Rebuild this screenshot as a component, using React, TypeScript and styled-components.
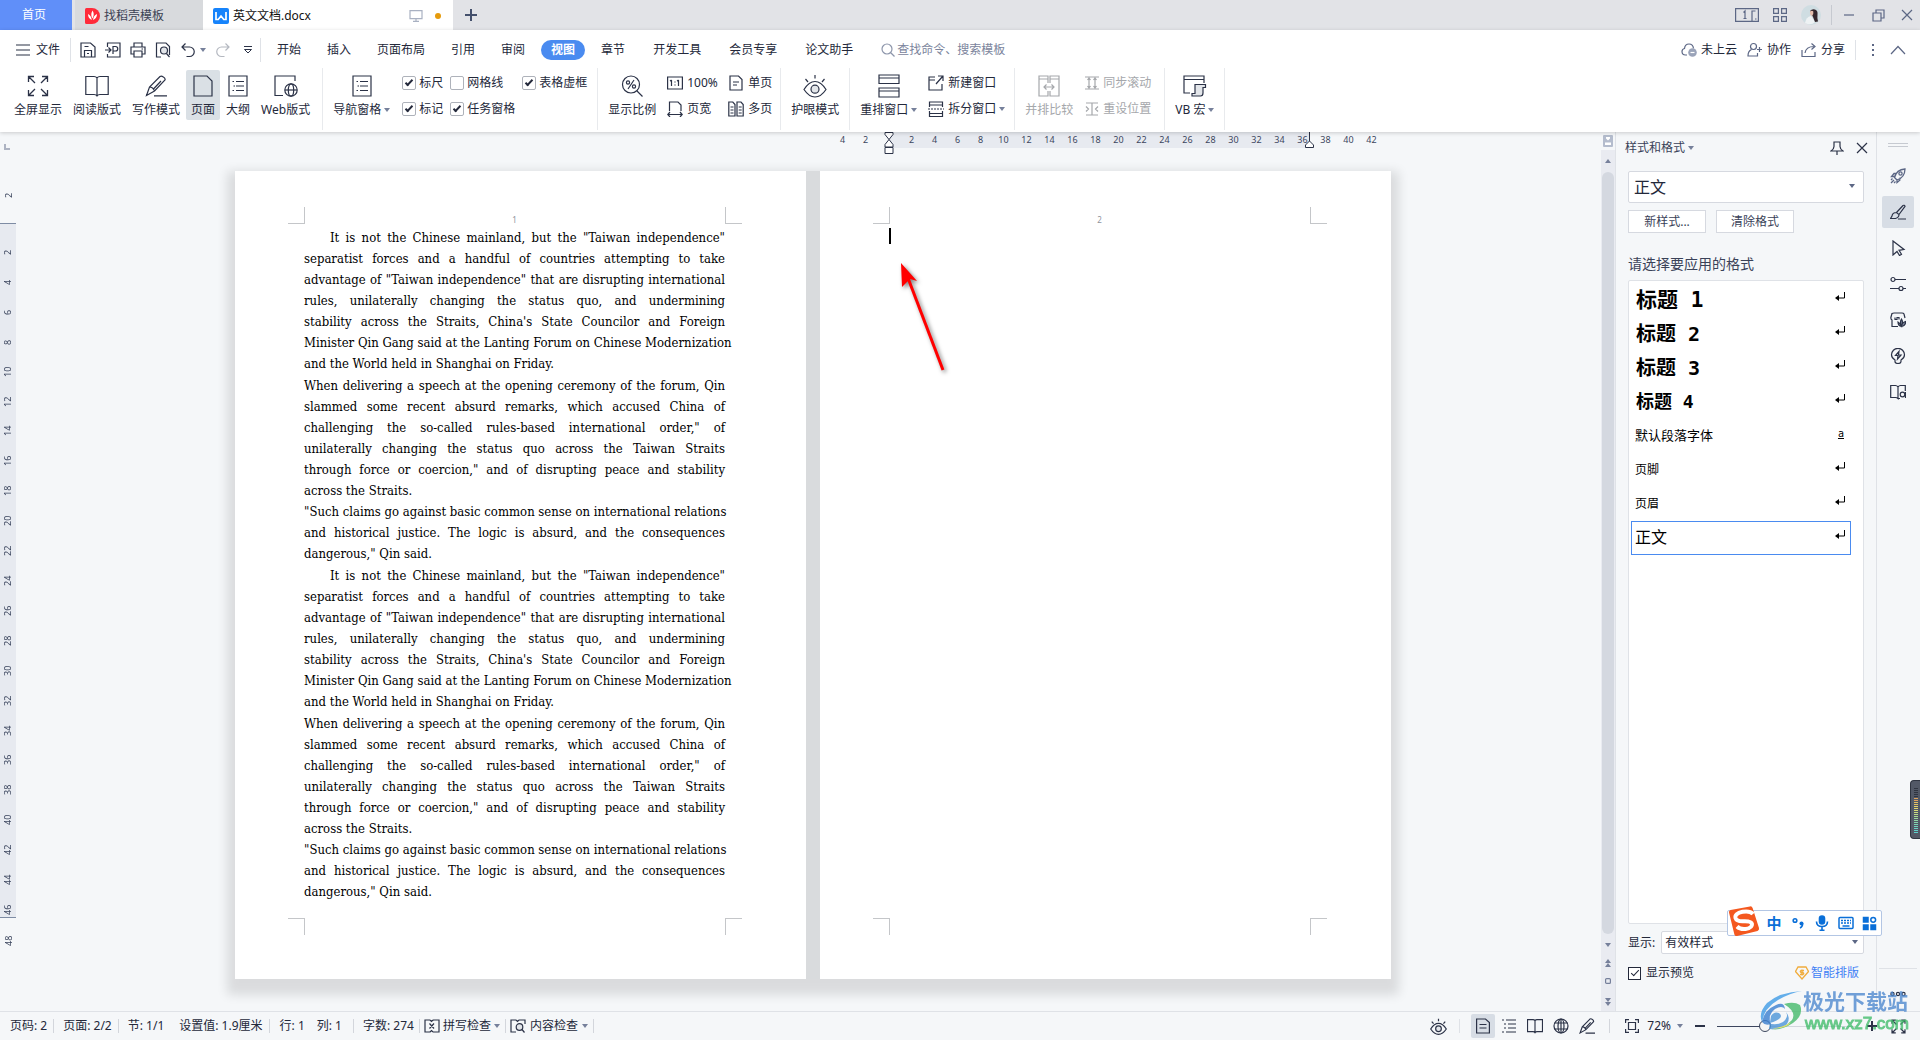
import React from "react";
import styled, { createGlobalStyle, css } from "styled-components";

const ink = "#2b3247";
const soft = "#5c6785";
const line = "#dfe2e7";
const canvasBg = "#f5f7f9";
const uiFont = `"Noto Sans", "Noto Sans CJK SC", sans-serif`;

const GlobalStyle = createGlobalStyle`
  *, *::before, *::after { box-sizing: border-box; }
  body { margin: 0; background: ${canvasBg}; font-family: ${uiFont}; font-size: 12px; line-height: 16px; color: #23283a; }
  button, input, select { font: inherit; color: inherit; margin: 0; }
  button { border: 0; background: none; padding: 0; cursor: pointer; white-space: nowrap; }
  ul, p { margin: 0; padding: 0; list-style: none; }
  svg { display: block; flex: none; }
`;

/* ---------- icons ---------- */

interface IconProps {
  w?: number;
  h?: number;
  color?: string;
  sw?: number;
  children?: React.ReactNode;
}

const Icon = ({ w = 16, h = w, color = ink, sw = 1.2, children }: IconProps) => (
  <svg width={w} height={h} viewBox={`0 0 ${w} ${h}`} fill="none" stroke={color} strokeWidth={sw} aria-hidden="true">
    {children}
  </svg>
);

const Caret = ({ color = "#76809b" }: { color?: string }) => (
  <svg width="6" height="4" viewBox="0 0 6 4" fill={color} aria-hidden="true"><path d="M0 0h6L3 4z" /></svg>
);

const DocerLogo = () => (
  <svg width="15" height="16" viewBox="0 0 15 16" aria-hidden="true">
    <path d="M0 1.500Q0 0 1.500 0H7a8 8 0 0 1 0 16H1.500Q0 16 0 14.500z" fill="#ff2b3a" />
    <path d="M7.600 2.500q2.200 4-.2 8-2.200-4 .2-8zM3 6q3.200 1.500 3.800 6Q3 10.500 3 6zM12 6q0 4.500-4 6 .4-4.500 4-6z" fill="#fff" />
  </svg>
);

const WriterLogo = () => (
  <svg width="16" height="16" viewBox="0 0 16 16" aria-hidden="true">
    <rect width="16" height="16" rx="2" fill="#1683fb" />
    <path d="M3 4v7.500h2.200L8 8l2.800 3.500H13V4" fill="none" stroke="#fff" strokeWidth="1.700" />
  </svg>
);

const SaveIcon = () => (
  <Icon><path d="M1 1h9.500L15 5v10H1zM4.500 15V8.500h7V15M4.500 4.500h4M7 11.500h2" /></Icon>
);
const ExportIcon = () => (
  <Icon><path d="M2.500 5V1h12.500v14H2.500v-3M0 8h6M3.500 5.500L6 8l-2.500 2.500M8 12V4.500h2.500a2.200 2.200 0 0 1 0 4.500H8" /></Icon>
);
const PrintIcon = () => (
  <Icon><path d="M4 5V1h8v4M4 12H1V5h14v7h-3M4 9h8v6H4zM11.500 7h1.500" /></Icon>
);
const PreviewIcon = () => (
  <Icon><path d="M6 15H1.500V1H11l3.500 3.500V13" /><circle cx="9" cy="8.500" r="3.500" fill="#e3e6ea" /><path d="M11.500 11.500l3 3.500" /></Icon>
);
const UndoIcon = ({ flip = false, color = ink }: { flip?: boolean; color?: string }) => (
  <Icon color={color}>
    <g transform={flip ? "translate(16 0) scale(-1 1)" : undefined}>
      <path d="M5.500 1.500L2 5l3.500 3.500M2 5h7.500a4.700 4.700 0 0 1 0 9.500H6.500" />
    </g>
  </Icon>
);

const FullIcon = ({ s = 22 }: { s?: number }) => (
  <svg width={s} height={s} viewBox="0 0 22 22" fill="none" stroke={ink} strokeWidth={s < 20 ? 1.800 : 1.300} aria-hidden="true">
    <path d="M1.500 7V1.500H7M1.500 1.500L8 8M15 1.500h5.500V7M20.500 1.500L14 8M1.500 15v5.500H7M1.500 20.500L8 14M15 20.500h5.500V15M20.500 20.500L14 14" />
  </svg>
);
const BookIcon = ({ s = 24 }: { s?: number }) => (
  <svg width={s} height={s} viewBox="0 0 24 24" fill="none" stroke={ink} strokeWidth={s < 20 ? 1.700 : 1.200} aria-hidden="true">
    <path d="M12 4Q11 2.500 9 2.500H.8V20.500H9q2 0 3 1.500 1-1.500 3-1.500h8.200V2.500H15q-2 0-3 1.500zM12 4v18" />
  </svg>
);
const PenIcon = ({ s = 22 }: { s?: number }) => (
  <svg width={s} height={s} viewBox="0 0 22 22" fill="none" stroke={ink} strokeWidth={s < 20 ? 1.600 : 1.200} aria-hidden="true">
    <path d="M1.500 20.500L4.500 12 15 1.500q1.500-1 3 .3 2.700 1.700 2 3.200L9.500 16zM4.500 12q3.500 0 5 4M16 6L8 14.500M9 20.800h13" />
  </svg>
);
const PageIcon = () => (
  <Icon w={20} h={22}><path d="M1 1h13l5 5v15H1z" /></Icon>
);
const OutlineIcon = () => (
  <Icon w={20} h={22}><path d="M1 1h18v20H1zM8 6.500h8M8 11h8M8 15.500h8M4.500 6.500h1.500M5.500 11H7M4.500 15.500h1.500" /></Icon>
);
const WebIcon = () => (
  <Icon w={24} h={22}>
    <path d="M9 20.500H1V1h20v5" /><circle cx="17" cy="15" r="6.200" /><ellipse cx="17" cy="15" rx="2.700" ry="6.200" /><path d="M11 15h12" />
  </Icon>
);
const ZoomPctIcon = () => (
  <Icon w={22} h={22}>
    <circle cx="10" cy="9.500" r="8.500" /><path d="M16 16l5.500 5.500M13 5l-6 9" /><circle cx="7" cy="7.500" r="1.600" /><circle cx="13" cy="11.500" r="1.600" />
  </Icon>
);
const OneToOneIcon = () => (
  <Icon h={14}><path d="M.6 1h14.800v12H.6zM4.500 4v6M3 5l1.500-1M11.500 4v6M10 5l1.500-1M8 5.500v1M8 8.500v1" /></Icon>
);
const PageWidthIcon = () => (
  <Icon><path d="M2.500 10V1H11l3 3v6M.8 13.500h14.400M3 11L.8 13.500 3 16M13 11l2.200 2.500L13 16" /></Icon>
);
const SinglePageIcon = () => (
  <Icon><path d="M2 1h8.500L14 4.500V15H2zM5 7h6M5 10h4" /></Icon>
);
const MultiPageIcon = () => (
  <Icon><path d="M.8 1h4L7 3.500V15H.8zM9 1h4l2.200 2.500V15H9zM2.500 6h3M2.500 9h3M2.500 12h3M10.700 6h3M10.700 9h3M10.700 12h3" /></Icon>
);
const EyeCareIcon = ({ s = 24 }: { s?: number }) => (
  <svg width={s} height={s} viewBox="0 0 24 24" fill="none" stroke={ink} strokeWidth={s < 20 ? 1.700 : 1.200} aria-hidden="true">
    <path d="M1 15.500Q6 7.500 12 7.500t11 8Q18 23 12 23T1 15.500z" /><circle cx="12" cy="15.200" r="4" fill="#e3e6ea" /><path d="M12 1v3.500M2.500 5l2.500 3M21.500 5L19 8" />
  </svg>
);
const ArrangeIcon = () => (
  <Icon w={22} h={24}><path d="M1 9.500V1h20v8.500zM1 4h20M1 14h20v9H1zM1 17h20" /></Icon>
);
const NewWindowIcon = () => (
  <Icon><path d="M7 2H1v13h13V9M1 5h6M8 9l6.500-7.500M10 1h5v5" /></Icon>
);
const SplitIcon = () => (
  <Icon><path d="M1.500 6V1h13v5M1.500 4h13M1.500 10v5.500h13V10M1.500 12.500h13" /><path d="M0 8h16" strokeDasharray="2 1" /></Icon>
);
const CompareIcon = () => (
  <Icon w={22} h={22} color="#a5a7ab"><path d="M10 8V1H1v20h9v-5M12 8V1h9v20h-9v-5M1 4h9M12 4h9M6 12h10M8.500 9.500L6 12l2.500 2.500M13.500 9.500L16 12l-2.500 2.500" /></Icon>
);
const SyncIcon = () => (
  <Icon w={14} h={14} color="#a5a7ab"><path d="M0 1h14M0 13h14M4 2v10M2.500 4L4 2l1.500 2M2.500 10L4 12l1.500-2M10 2v10M8.500 4L10 2l1.500 2M8.500 10l1.500 2 1.500-2" /></Icon>
);
const ResetIcon = () => (
  <Icon w={14} h={14} color="#a5a7ab"><path d="M1 1h12M1 13h12M7 1v12M1 4.500L3.500 7 1 9.500M13 4.500L10.500 7 13 9.500" /></Icon>
);
const MacroIcon = () => (
  <Icon w={24} h={22}><path d="M7 18H1V1h20v7M1 4.500h20" /><path d="M12 9.500h10.500v3H20V18q0 3-2.500 3H9v-2.500h3z" fill="#e3e6ea" /></Icon>
);

const RocketIcon = () => (
  <Icon color={soft} sw={1.300}><path d="M6 11L4.500 9.500Q6.500 1.500 15 1q-.2 8.500-8 11zM4.800 8.500H1.500L4 5.500h2.500M7 11.500v3l3-2.500V9.500M1 15l3-3M1 12l1.500-1.500M4 15l1.500-1.500" /><circle cx="10.500" cy="5.500" r="1.600" /></Icon>
);
const BrushIcon = () => (
  <Icon><path d="M6.500 8.500L13 1.500q1.500-.8 2 .8L9 10.500M6.500 8.500Q2.500 8.500 2 12l-1.500 2.500h5Q9 13.500 9 10.500zM8 15h8" /></Icon>
);
const CursorIcon = () => (
  <Icon><path d="M3 1l11 8.500-5 .8 2.500 4-2 1.200L7 11.500 3 15z" /></Icon>
);
const SlidersIcon = () => (
  <Icon><circle cx="3" cy="3.500" r="2" /><path d="M5 3.500h11M0 12.500h9M13 12.500h3" /><circle cx="11" cy="12.500" r="2" /></Icon>
);
const ShopIcon = () => (
  <Icon><path d="M8 14.500H2V8Q.5 7 1 5l1-3.500Q3 1 4 1h8q1.500 0 2 1l1 4M5 5.500v2h2v-2h2v2" /><path d="M11.500 7q2 3 0 7-2-4 0-7zM8 10q0 4 3.500 4.500Q10 11 8 10zM15.500 9.500q.5 4-4 5 .5-4 4-5z" fill="#8089a0" /></Icon>
);
const BulbIcon = () => (
  <Icon><path d="M5 13.500V12Q1.500 10 1.500 6.800a6.500 6.500 0 0 1 13 0Q14.500 10 11 12v1.500q0 2-3 2t-3-2z" /><path d="M9 3.500L5.500 7.500H8L7.500 11l3.500-4H8.500z" /></Icon>
);
const LookupIcon = () => (
  <Icon><path d="M8 3Q7 1.500 5.500 1.500H.7V13.500H5.500Q7 13.500 8 14.500V3q1-1.500 2.500-1.500h4.800V7M8 14.500h2" /><circle cx="12.500" cy="10.500" r="2.300" /><path d="M15.500 8v6" /></Icon>
);

/* ---------- title bar ---------- */

const Shell = styled.div`
  display: flex;
  flex-direction: column;
  height: 100vh;
  overflow: hidden;
`;

const TitleBar = styled.header`
  display: flex;
  height: 30px;
  background: #e2e3e7;
`;

const HomeTab = styled.button`
  width: 72px;
  margin-right: 3px;
  padding-right: 4px;
  background: #608ff9;
  color: #fff;
`;

const FileTab = styled.button<{ $active?: boolean }>`
  display: flex;
  align-items: center;
  gap: 4px;
  width: ${p => (p.$active ? 250 : 128)}px;
  padding: 1px 12px 0 10px;
  background: ${p => (p.$active ? "#fff" : "#d8dadd")};
  color: ${p => (p.$active ? "#111" : "#3c4254")};
`;

const TabTools = styled.span`
  display: flex;
  align-items: center;
  gap: 12px;
  margin-left: auto;
`;

const UnsavedDot = styled.span`
  width: 6px;
  height: 6px;
  border-radius: 50%;
  background: #e69b0c;
`;

const NewTab = styled.button`
  display: grid;
  place-items: center;
  width: 36px;
`;

const WindowTools = styled.div`
  display: flex;
  align-items: center;
  gap: 14px;
  margin-left: auto;
  padding-right: 7px;
`;

const WindowButtons = styled.div`
  display: flex;
  align-items: center;
  gap: 16px;
  height: 20px;
  padding-left: 12px;
  margin-left: -4px;
  border-left: 1px solid #c6c9d0;
`;

/* ---------- menu row ---------- */

const Header = styled.div`
  position: relative;
  z-index: 2;
  background: #fff;
  box-shadow: 0 1px 4px rgba(0, 0, 0, 0.18);
`;

const MenuRow = styled.nav`
  display: flex;
  align-items: center;
  height: 38px;
  padding: 2px 14px 0 16px;
`;

const FileButton = styled.button`
  display: flex;
  align-items: center;
  gap: 6px;
  padding-right: 10px;
`;

const QuickTools = styled.div`
  display: flex;
  align-items: center;
  gap: 9px;
  height: 24px;
  padding: 0 4px 0 9px;
  border: solid ${line};
  border-width: 0 1px;
`;

const UndoGroup = styled.span`
  display: flex;
  align-items: center;
  gap: 4px;
`;

const MenuTabs = styled.div<{ $gap: number }>`
  display: flex;
  gap: ${p => p.$gap}px;
  margin-left: ${p => p.$gap}px;
`;

const MenuTab = styled.button<{ $active?: boolean }>`
  height: 20px;
  padding: 0 10px;
  border-radius: 10px;
  ${p => p.$active && css`
    background: #4a8bf0;
    color: #fff;
    font-weight: 700;
  `}
`;

const Search = styled.label`
  display: flex;
  align-items: center;
  gap: 2px;
  margin-left: 18px;
`;

const SearchInput = styled.input`
  width: 140px;
  border: 0;
  padding: 0;
  background: none;
  outline: 0;
  &::placeholder { color: #7b849c; opacity: 1; }
`;

const MenuRight = styled.div`
  display: flex;
  align-items: center;
  gap: 10px;
  margin-left: auto;
`;

const IconText = styled.button<{ $gap?: number }>`
  display: flex;
  align-items: center;
  gap: ${p => p.$gap ?? 4}px;
  &:disabled { color: #a5a7ab; }
`;

const VRule = styled.span<{ $h: number }>`
  width: 1px;
  height: ${p => p.$h}px;
  background: ${line};
`;

/* ---------- ribbon ---------- */

const Ribbon = styled.div`
  display: flex;
  height: 64px;
  padding-left: 9px;
`;

const Group = styled.section<{ $gap?: number; $pad?: string }>`
  display: flex;
  gap: ${p => p.$gap ?? 0}px;
  height: 62px;
  padding: ${p => p.$pad ?? "0 5px"};
  border-right: 1px solid #e8eaed;
`;

const BigButton = styled.button<{ $active?: boolean }>`
  display: flex;
  flex-direction: column;
  align-items: center;
  gap: 4px;
  height: 50px;
  margin-top: 2px;
  padding: 4px 5px 0;
  border-radius: 2px;
  background: ${p => (p.$active ? "#dae0e5" : "none")};
  &:disabled { color: #a5a7ab; }
`;

const BigIcon = styled.span`
  display: grid;
  place-items: center;
  height: 24px;
`;

const Label = styled.span`
  display: flex;
  align-items: center;
  gap: 3px;
`;

const SmallGrid = styled.div<{ $cols: string; $gap?: number }>`
  display: grid;
  grid-template-columns: ${p => p.$cols};
  column-gap: ${p => p.$gap ?? 10}px;
  row-gap: 10px;
  align-content: start;
  align-items: center;
  padding-top: 7px;
  grid-auto-rows: 16px;
`;

const CheckLabel = styled.label<{ $gap?: number }>`
  display: flex;
  align-items: center;
  gap: ${p => p.$gap ?? 3}px;
  white-space: nowrap;
`;

const Check = styled.input.attrs({ type: "checkbox" })<{ $square?: boolean }>`
  appearance: none;
  display: grid;
  place-items: center;
  width: ${p => (p.$square ? 13 : 14)}px;
  height: ${p => (p.$square ? 13 : 14)}px;
  flex: none;
  border: 1px solid ${p => (p.$square ? "#23283a" : "#aeb2ba")};
  border-radius: ${p => (p.$square ? 0 : 2)}px;
  background: #fff;
  &:checked::after {
    content: "";
    width: 8px;
    height: 4px;
    margin-top: -2px;
    border: solid #23283a;
    border-width: 0 0 ${p => (p.$square ? 1 : 2)}px ${p => (p.$square ? 1 : 2)}px;
    transform: rotate(-47deg);
  }
`;

/* ---------- workspace ---------- */

const Workspace = styled.div`
  display: grid;
  grid-template-columns: 16px minmax(0, 1fr) 14px 261px 44px;
  flex: 1;
  min-height: 0;
`;

const VRuler = styled.div`
  display: flex;
  flex-direction: column;
  font-size: 9px;
  line-height: 10px;
  color: #3c465e;
`;

const VTop = styled.div`
  display: flex;
  flex-direction: column;
  justify-content: space-between;
  height: 91px;
  padding: 12px 0 13px 4px;
  flex: none;
`;

const TabStop = styled.span`
  width: 6px;
  height: 6px;
  border: solid #adb3c2;
  border-width: 0 0 2px 2px;
`;

const VBody = styled.div`
  flex: none;
  height: 695px;
  padding-top: 13px;
  background: #e7eaf0;
  border: solid #7e8ca4;
  border-width: 1px 0;
`;

const VCells = styled.div`
  display: flex;
  flex-direction: column;
  height: 688px;
`;

const VCell = styled.span<{ $fixed?: boolean }>`
  display: grid;
  place-items: center;
  width: ${p => (p.$fixed ? 8 : 16)}px;
  flex: ${p => (p.$fixed ? "0 0 30px" : "1")};
  writing-mode: vertical-rl;
  transform: rotate(180deg);
`;

const VTail = styled.div`
  padding: 8px 0 0 4px;
  display: flex;
  flex-direction: column;
`;

const Canvas = styled.main`
  display: flex;
  flex-direction: column;
  align-items: center;
  min-width: 0;
  padding-left: 9px;
  overflow: hidden;
`;

const HRuler = styled.div`
  display: flex;
  width: 1156px;
  height: 16px;
  padding-left: 585px;
  font-size: 9px;
  line-height: 15px;
  color: #3c465e;
  flex: none;
`;

const HPart = styled.div<{ $w: number; $pad: number; $on?: boolean }>`
  position: relative;
  display: flex;
  flex: none;
  width: ${p => p.$w}px;
  padding-left: ${p => p.$pad}px;
  background: ${p => (p.$on ? "#e7eaf0" : "none")};
  & > span { flex: 0 0 23px; text-align: center; }
`;

const IndentMark = styled.svg<{ $end?: boolean }>`
  position: absolute;
  top: 0;
  ${p => (p.$end ? "right: -4px;" : "left: -5px;")}
`;

const Spread = styled.div`
  display: flex;
  flex: none;
  gap: 14px;
  margin-top: 23px;
  background: #d9dbdd;
  box-shadow: 0 8px 10px 8px rgba(0, 0, 0, 0.11);
`;

const Page = styled.article`
  position: relative;
  width: 571px;
  height: 808px;
  padding: 41px 81px 0 69px;
  background: #fff;
`;

const PageNumber = styled.div`
  height: 15px;
  font-size: 8px;
  line-height: 15px;
  text-align: center;
  color: #8e939c;
`;

const Corner = styled.span<{ $y: "top" | "bottom"; $x: "left" | "right" }>`
  position: absolute;
  width: 17px;
  height: 17px;
  border: 0 solid #c4c6c9;
  ${p => p.$y}: ${p => (p.$y === "top" ? 36 : 44)}px;
  ${p => p.$x}: ${p => (p.$x === "left" ? 53 : 64)}px;
  border-${p => (p.$y === "top" ? "bottom" : "top")}-width: 1px;
  border-${p => (p.$x === "left" ? "right" : "left")}-width: 1px;
`;

const Passage = styled.section`
  font-family: "DejaVu Serif Condensed", "DejaVu Serif", serif;
  font-stretch: condensed;
  font-size: 13px;
  line-height: 21px;
  color: #000;
  & + & { margin-top: 1px; }
`;

const Paragraph = styled.p<{ $indent?: boolean }>`
  margin-bottom: ${p => (p.$indent ? 1 : 0)}px;
  & > span { display: block; white-space: nowrap; text-align: justify; text-align-last: justify; }
  & > span:last-child { text-align-last: left; }
  & > span:first-child { padding-left: ${p => (p.$indent ? 26 : 0)}px; }
`;

const TextCursor = styled.span`
  display: block;
  width: 2px;
  height: 16px;
  margin-top: 1px;
  background: #000;
`;

const Arrow = styled.svg`
  position: absolute;
  left: 76px;
  top: 88px;
  filter: drop-shadow(2px 2px 2px rgba(0, 0, 0, 0.5));
`;

/* ---------- scroll bar ---------- */

const ScrollRail = styled.div`
  display: flex;
  flex-direction: column;
  align-items: center;
  background: #e9ebf1;
`;

const SplitBox = styled.div`
  display: grid;
  place-items: center;
  width: 14px;
  height: 18px;
  background: ${canvasBg};
`;

const RailButton = styled.button<{ $h: number }>`
  display: grid;
  place-items: center;
  width: 14px;
  height: ${p => p.$h}px;
`;

const Thumb = styled.div`
  flex: 1;
  width: 12px;
  border-radius: 6px;
  background: #d4d8e0;
`;

/* ---------- task pane ---------- */

const Pane = styled.aside`
  display: flex;
  flex-direction: column;
  padding: 6px 12px 30px;
  border-left: 1px solid ${line};
  min-height: 0;
`;

const PaneTitle = styled.div`
  display: flex;
  align-items: center;
  height: 20px;
  margin: 0 -4px 13px -3px;
  color: #3a4258;
`;

const PaneTools = styled.span`
  display: flex;
  align-items: center;
  gap: 12px;
  margin-left: auto;
`;

const SelectBox = styled.span<{ $large?: boolean }>`
  position: relative;
  display: block;
  flex: ${p => (p.$large ? "none" : "1")};
  & > svg { position: absolute; right: ${p => (p.$large ? 9 : 6)}px; top: calc(50% - 3px); pointer-events: none; }
  & > select {
    appearance: none;
    display: block;
    width: 100%;
    height: ${p => (p.$large ? 32 : 23)}px;
    padding: 0 20px 0 ${p => (p.$large ? 5 : 3)}px;
    border: 1px solid #d6d9e0;
    border-radius: 2px;
    background: #fff;
    font-size: ${p => (p.$large ? 16 : 12)}px;
    outline: 0;
  }
`;

const PaneButtons = styled.div`
  display: flex;
  gap: 10px;
  margin: 7px 0 21px;
`;

const PaneButton = styled.button`
  width: 78px;
  height: 23px;
  border: 1px solid #d6d9e0;
  background: #fff;
  color: #3a4258;
`;

const PaneHeading = styled.h2`
  margin: 0 0 6px;
  font-size: 14px;
  font-weight: 400;
  line-height: 20px;
  color: #3a4258;
`;

const StyleList = styled.ul`
  flex: 1;
  min-height: 0;
  padding: 2px 12px 0 2px;
  border: 1px solid ${line};
  border-radius: 2px;
  background: #fff;
  overflow: hidden;
`;

const StyleItem = styled.li<{ $size: number; $bold?: boolean; $on?: boolean }>`
  display: flex;
  justify-content: space-between;
  align-items: center;
  height: 34px;
  padding: 0 5px 0 ${p => (p.$bold ? 4 : 3)}px;
  border: 1px solid ${p => (p.$on ? "#4a8bf0" : "transparent")};
  font-family: "DejaVu Sans Mono", "Noto Sans CJK SC", sans-serif;
  font-size: ${p => p.$size}px;
  font-weight: ${p => (p.$bold ? 700 : 400)};
  line-height: 24px;
  color: #000;
  & > svg, & > u { margin-bottom: 8px; }
  & > u { font-size: 10px; line-height: 14px; margin-bottom: 4px; margin-right: 1px; }
`;

const ShowRow = styled.label`
  display: flex;
  align-items: center;
  gap: 6px;
  margin-top: 7px;
`;

const PaneFoot = styled.div`
  display: flex;
  align-items: center;
  justify-content: space-between;
  margin-top: 11px;
  padding-right: 5px;
`;

const SmartLink = styled.a`
  display: flex;
  align-items: center;
  gap: 2px;
  color: #3f7ff5;
  text-decoration: none;
`;

const SideBar = styled.aside`
  display: flex;
  flex-direction: column;
  align-items: center;
  gap: 4px;
  padding: 11px 1px 14px 0;
  border-left: 1px solid ${line};
`;

const Grip = styled.span`
  width: 20px;
  height: 4px;
  margin-bottom: 9px;
  border: solid #c6cad1;
  border-width: 1px 0;
`;

const SideButton = styled.button<{ $active?: boolean }>`
  display: grid;
  place-items: center;
  width: 32px;
  height: 32px;
  border-radius: 2px;
  background: ${p => (p.$active ? "#d7dde5" : "none")};
`;

const SideMore = styled.div`
  display: flex;
  justify-content: center;
  width: 38px;
  margin-top: auto;
  padding-top: 22px;
  border-top: 1px solid ${line};
`;

/* ---------- status bar ---------- */

const StatusBar = styled.footer`
  display: flex;
  align-items: center;
  height: 29px;
  padding-right: 14px;
  border-top: 1px solid ${line};
`;

const StatusItem = styled.span<{ $pad: string; $rule?: boolean }>`
  display: flex;
  align-items: center;
  height: 14px;
  padding: ${p => p.$pad};
  border-right: ${p => (p.$rule ? 1 : 0)}px solid #d3d6dc;
  white-space: nowrap;
`;

const StatusRight = styled.div`
  display: flex;
  align-items: center;
  margin-left: auto;
`;

const ViewButton = styled.button<{ $active?: boolean }>`
  display: grid;
  place-items: center;
  width: 24px;
  height: 24px;
  margin-right: 2px;
  border-radius: 2px;
  background: ${p => (p.$active ? "#d7dde5" : "none")};
`;

const ViewRule = styled(VRule)`
  margin: 0 11px 0 7px;
`;

const ZoomArea = styled.div`
  display: flex;
  align-items: center;
  height: 14px;
  margin-left: 8px;
  padding-left: 15px;
  border-left: 1px solid #d3d6dc;
`;

const ZoomValue = styled.button`
  display: flex;
  align-items: center;
  gap: 6px;
  margin: 0 12px 0 8px;
`;

const ZoomSlider = styled.input.attrs({ type: "range" })`
  appearance: none;
  width: 138px;
  height: 14px;
  margin: 0 12px;
  background: linear-gradient(to right, #3c465e 34%, #d3d6de 34%) center / 100% 1px no-repeat;
  &::-webkit-slider-thumb {
    appearance: none;
    width: 12px;
    height: 12px;
    border: 1px solid #3c465e;
    border-radius: 50%;
    background: #f5f5f5;
  }
`;

const FullScreenButton = styled.button`
  margin-left: 14px;
`;

/* ---------- floating items ---------- */

const ImeBar = styled.div`
  position: fixed;
  right: 38px;
  bottom: 104px;
  z-index: 5;
  display: flex;
  align-items: center;
  gap: 8px;
  height: 26px;
  padding-right: 4px;
  border: 1px solid #b3c6e4;
  border-radius: 2px;
  background: #fff;
  color: #0a6fd8;
`;

const ImeLogo = styled.span`
  margin: -8px -2px -4px 0;
`;

const ImeChar = styled.span`
  width: 16px;
  text-align: center;
  font-size: 15px;
  font-weight: 700;
`;

const EdgeMeter = styled.div`
  position: fixed;
  right: 0;
  bottom: 201px;
  z-index: 5;
  display: flex;
  flex-direction: column;
  gap: 1px;
  width: 10px;
  height: 59px;
  padding: 7px 2px 0 3px;
  border: 1px solid #2f3440;
  border-right: 0;
  border-radius: 4px 0 0 4px;
  background: #525866;
`;

const MeterBar = styled.i<{ $c: string }>`
  height: 1px;
  background: ${p => p.$c};
`;

const Watermark = styled.div`
  position: fixed;
  right: 11px;
  bottom: 6px;
  z-index: 6;
  display: flex;
  gap: 1px;
  opacity: 0.8;
  pointer-events: none;
  font-family: "Liberation Sans", "Noto Sans CJK SC", sans-serif;
`;

const MarkTitle = styled.div`
  font-size: 21px;
  line-height: 24px;
  font-weight: 700;
  color: #4f89cf;
`;

const MarkSite = styled.div`
  padding-left: 2px;
  font-size: 17px;
  line-height: 20px;
  color: #43bd6c;
  -webkit-text-stroke: 1px #43bd6c;
`;

/* ---------- data ---------- */

const passage = [
  {
    indent: true,
    lines: [
      "It is not the Chinese mainland, but the \"Taiwan independence\"",
      "separatist forces and a handful of countries attempting to take",
      "advantage of \"Taiwan independence\" that are disrupting international",
      "rules, unilaterally changing the status quo, and undermining",
      "stability across the Straits, China's State Councilor and Foreign",
      "Minister Qin Gang said at the Lanting Forum on Chinese Modernization",
      "and the World held in Shanghai on Friday.",
    ],
  },
  {
    indent: false,
    lines: [
      "When delivering a speech at the opening ceremony of the forum, Qin",
      "slammed some recent absurd remarks, which accused China of",
      "challenging the so-called rules-based international order,\" of",
      "unilaterally changing the status quo across the Taiwan Straits",
      "through force or coercion,\" and of disrupting peace and stability",
      "across the Straits.",
    ],
  },
  {
    indent: false,
    lines: [
      "\"Such claims go against basic common sense on international relations",
      "and historical justice. The logic is absurd, and the consequences",
      "dangerous,\" Qin said.",
    ],
  },
];

const styleItems: { name: string; size: number; bold?: boolean; char?: boolean; on?: boolean }[] = [
  { name: "标题 1", size: 21, bold: true },
  { name: "标题 2", size: 20, bold: true },
  { name: "标题 3", size: 20, bold: true },
  { name: "标题 4", size: 18, bold: true },
  { name: "默认段落字体", size: 13, char: true },
  { name: "页脚", size: 12 },
  { name: "页眉", size: 12 },
  { name: "正文", size: 16, on: true },
];

const evens = (from: number, to: number) =>
  Array.from({ length: (to - from) / 2 + 1 }, (_, i) => from + i * 2);

const meter = ["#2f3440", "#2f3440", "#2f3440", "#2f3440", "#2f3440", "#e0a35c", "#e0a35c", "#e3c264", "#e3c264", "#e3d56c", "#e3d56c", "#d9dc76", "#cbdc80", "#bcdc88", "#aadb90", "#9bd89a", "#8fd8a4", "#84d7ac", "#7ad6b4", "#72d4bb", "#6ad2c2", "#62d0c8", "#5cd0cc"];

/* ---------- parts ---------- */

interface ToolProps {
  icon: React.ReactNode;
  label: string;
  active?: boolean;
  caret?: boolean;
  disabled?: boolean;
}

const Big = ({ icon, label, active, caret, disabled }: ToolProps) => (
  <BigButton $active={active} disabled={disabled}>
    <BigIcon>{icon}</BigIcon>
    <Label>{label}{caret && <Caret />}</Label>
  </BigButton>
);

const Small = ({ icon, label, caret, disabled }: ToolProps) => (
  <IconText disabled={disabled}>{icon}<Label>{label}{caret && <Caret />}</Label></IconText>
);

const Corners = () => (
  <>
    <Corner $y="top" $x="left" /><Corner $y="top" $x="right" />
    <Corner $y="bottom" $x="left" /><Corner $y="bottom" $x="right" />
  </>
);

const Title = () => (
  <TitleBar>
    <HomeTab>首页</HomeTab>
    <FileTab><DocerLogo />找稻壳模板</FileTab>
    <FileTab $active>
      <WriterLogo />英文文档.docx
      <TabTools>
        <Icon w={14} h={12} color="#a9b1c2"><path d="M1 .6h12v8H1zM7 9v2M4 11.400h6" /></Icon>
        <UnsavedDot />
      </TabTools>
    </FileTab>
    <NewTab aria-label="新建标签"><Icon w={12} color="#44506c" sw={2}><path d="M6 0v12M0 6h12" /></Icon></NewTab>
    <WindowTools>
      <Icon w={24} h={14} color={soft}><path d="M.6.6h22.800v12.800H.6zM8.500 4.500L10 3v7.500M8.500 10.500h3M20.500 3H17v10M20 11h1.500" /></Icon>
      <Icon w={14} color={soft}><path d="M.6.6h4.800v4.800H.6zM8.600.6h4.800v4.800H8.600zM.6 8.600h4.800v4.800H.6zM8.600 8.600h4.800v4.800H8.600z" /></Icon>
      <svg width="20" height="20" viewBox="0 0 20 20" aria-hidden="true">
        <circle cx="10" cy="10" r="10" fill="#cfdde2" />
        <path d="M4 18q1-6 6-7l4 6q-4 4-10 1z" fill="#eef2f4" />
        <path d="M9 6q2-2.500 5-1.500 3 1 2.500 5t.5 7l-3 .5-2-5z" fill="#33262c" />
        <path d="M9 6.500q2-1.500 3.300 0 .5 3-1.300 4.500Q8.500 10 9 6.500z" fill="#e5bfae" />
      </svg>
      <WindowButtons>
        <button aria-label="最小化"><Icon w={12} color={soft}><path d="M0 6h10" /></Icon></button>
        <button aria-label="还原"><Icon w={13} color={soft}><path d="M1 4h8v8H1zM4 4V1h8v8H9" /></Icon></button>
        <button aria-label="关闭"><Icon w={12} color={soft}><path d="M1 1l10 10M11 1L1 11" /></Icon></button>
      </WindowButtons>
    </WindowTools>
  </TitleBar>
);

const Menu = () => (
  <MenuRow>
    <FileButton><Icon w={14} h={12}><path d="M0 1h14M0 6h14M0 11h14" /></Icon>文件</FileButton>
    <QuickTools>
      <button aria-label="保存"><SaveIcon /></button>
      <button aria-label="输出"><ExportIcon /></button>
      <button aria-label="打印"><PrintIcon /></button>
      <button aria-label="打印预览"><PreviewIcon /></button>
      <UndoGroup><button aria-label="撤销"><UndoIcon /></button><Caret /></UndoGroup>
      <button aria-label="恢复"><UndoIcon flip color="#b4b8c0" /></button>
      <button aria-label="更多"><Icon w={16} h={8} sw={1}><path d="M4 .5h8M4.500 3.500h7L8 7z" /></Icon></button>
    </QuickTools>
    <MenuTabs $gap={6}>
      {["开始", "插入", "页面布局", "引用", "审阅", "视图", "章节"].map(t => (
        <MenuTab key={t} $active={t === "视图"}>{t}</MenuTab>
      ))}
    </MenuTabs>
    <MenuTabs $gap={8}>
      {["开发工具", "会员专享", "论文助手"].map(t => <MenuTab key={t}>{t}</MenuTab>)}
    </MenuTabs>
    <Search>
      <Icon w={14} color="#8d96ab"><circle cx="6" cy="6" r="5" /><path d="M9.500 9.500l4 4" /></Icon>
      <SearchInput placeholder="查找命令、搜索模板" aria-label="查找命令" />
    </Search>
    <MenuRight>
      <IconText>
        <Icon color={soft}><path d="M6 13H4.500Q1 13 1 9.500 1 7 3.500 6.500 4 2 8 2t4.500 4.500" /><circle cx="11.500" cy="10.500" r="4.300" fill="#9aa3b9" stroke="none" /><path d="M9.500 10.500h4" stroke="#fff" /></Icon>
        未上云
      </IconText>
      <IconText>
        <Icon color={soft}><circle cx="6.500" cy="4.500" r="3" /><path d="M4.500 7.500Q1 9 1 14h9.500v-3M10 7.500h5M12.500 5v5" /></Icon>
        协作
      </IconText>
      <IconText>
        <Icon color={soft}><path d="M1 8v6.500h13V10M4 11q1-6.500 9-6.500M10.500 1.500L14 4.500l-3.500 3" /></Icon>
        分享
      </IconText>
      <VRule $h={20} />
      <button aria-label="更多"><Icon w={14} h={14} color="none"><g fill={soft}><rect x="6" y="1" width="2" height="2" /><rect x="6" y="6" width="2" height="2" /><rect x="6" y="11" width="2" height="2" /></g></Icon></button>
      <button aria-label="收起功能区"><Icon w={16} h={10} color={soft}><path d="M1 9l7-7.500L15 9" /></Icon></button>
    </MenuRight>
  </MenuRow>
);

const RibbonBar = () => (
  <Ribbon>
    <Group $gap={1} $pad="0 7px 0 0">
      <Big icon={<FullIcon />} label="全屏显示" />
      <Big icon={<BookIcon />} label="阅读版式" />
      <Big icon={<PenIcon />} label="写作模式" />
      <Big icon={<PageIcon />} label="页面" active />
      <Big icon={<OutlineIcon />} label="大纲" />
      <Big icon={<WebIcon />} label="Web版式" />
    </Group>
    <Group $gap={7} $pad="0 10px 0 5px">
      <Big icon={<OutlineIcon />} label="导航窗格" caret />
      <SmallGrid $cols="40px 64px auto" $gap={8}>
        <CheckLabel><Check defaultChecked />标尺</CheckLabel>
        <CheckLabel><Check />网格线</CheckLabel>
        <CheckLabel><Check defaultChecked />表格虚框</CheckLabel>
        <CheckLabel><Check defaultChecked />标记</CheckLabel>
        <CheckLabel><Check defaultChecked />任务窗格</CheckLabel>
      </SmallGrid>
    </Group>
    <Group $gap={6} $pad="0 8px 0 5px">
      <Big icon={<ZoomPctIcon />} label="显示比例" />
      <SmallGrid $cols="51px auto">
        <Small icon={<OneToOneIcon />} label="100%" />
        <Small icon={<SinglePageIcon />} label="单页" />
        <Small icon={<PageWidthIcon />} label="页宽" />
        <Small icon={<MultiPageIcon />} label="多页" />
      </SmallGrid>
    </Group>
    <Group>
      <Big icon={<EyeCareIcon />} label="护眼模式" />
    </Group>
    <Group $gap={6} $pad="0 9px 0 5px">
      <Big icon={<ArrangeIcon />} label="重排窗口" caret />
      <SmallGrid $cols="auto">
        <Small icon={<NewWindowIcon />} label="新建窗口" />
        <Small icon={<SplitIcon />} label="拆分窗口" caret />
      </SmallGrid>
    </Group>
    <Group $gap={7} $pad="0 13px 0 5px">
      <Big icon={<CompareIcon />} label="并排比较" disabled />
      <SmallGrid $cols="auto">
        <Small icon={<SyncIcon />} label="同步滚动" disabled />
        <Small icon={<ResetIcon />} label="重设位置" disabled />
      </SmallGrid>
    </Group>
    <Group>
      <Big icon={<MacroIcon />} label="VB 宏" caret />
    </Group>
  </Ribbon>
);

const DocumentText = () => (
  <Passage>
    {passage.map(p => (
      <Paragraph key={p.lines[0]} $indent={p.indent}>
        {p.lines.map(l => <span key={l}>{l}</span>)}
      </Paragraph>
    ))}
  </Passage>
);

const TaskPane = () => (
  <Pane>
    <PaneTitle>
      <Label>样式和格式<Caret /></Label>
      <PaneTools>
        <button aria-label="固定"><Icon w={14} h={14}><path d="M4 1h6v4.500q0 2.500 3 4.500H1q3-2 3-4.500zM7 10v4" /></Icon></button>
        <button aria-label="关闭"><Icon w={12}><path d="M1 1l10 10M11 1L1 11" /></Icon></button>
      </PaneTools>
    </PaneTitle>
    <SelectBox $large>
      <select aria-label="当前样式" defaultValue="正文"><option>正文</option></select>
      <Caret color="#5c6785" />
    </SelectBox>
    <PaneButtons>
      <PaneButton>新样式...</PaneButton>
      <PaneButton>清除格式</PaneButton>
    </PaneButtons>
    <PaneHeading>请选择要应用的格式</PaneHeading>
    <StyleList>
      {styleItems.map(s => (
        <StyleItem key={s.name} $size={s.size} $bold={s.bold} $on={s.on}>
          {s.name}
          {s.char ? <u>a</u> : (
            <Icon w={10} h={9} color="#000" sw={1}><path d="M9.500 0v6H2" /><path d="M4 3v6L0 6z" fill="#000" stroke="none" /></Icon>
          )}
        </StyleItem>
      ))}
    </StyleList>
    <ShowRow>
      显示:
      <SelectBox>
        <select defaultValue="有效样式"><option>有效样式</option></select>
        <Caret color="#5c6785" />
      </SelectBox>
    </ShowRow>
    <PaneFoot>
      <CheckLabel $gap={5}><Check $square defaultChecked />显示预览</CheckLabel>
      <SmartLink href="#">
        <Icon w={14} color="#f0ac3c" sw={1.300}><path d="M3 1h8l2.500 4.500L7 13 .5 5.500z" /><path d="M9 4.500H6q-1.500 1 0 2h2q1.500 1 0 2H5M7 3.500v6" /></Icon>
        智能排版
      </SmartLink>
    </PaneFoot>
  </Pane>
);

const Status = () => (
  <StatusBar>
    <StatusItem $pad="0 6px 0 10px" $rule>页码: 2</StatusItem>
    <StatusItem $pad="0 6px 0 9px" $rule>页面: 2/2</StatusItem>
    <StatusItem $pad="0 15px 0 9px">节: 1/1</StatusItem>
    <StatusItem $pad="0 6px 0 0" $rule>设置值: 1.9厘米</StatusItem>
    <StatusItem $pad="0 12px 0 10px">行: 1</StatusItem>
    <StatusItem $pad="0 11px 0 0" $rule>列: 1</StatusItem>
    <StatusItem $pad="0 5px 0 9px" $rule>字数: 274</StatusItem>
    <StatusItem $pad="0 5px 0 4px" $rule>
      <IconText $gap={3}>
        <Icon h={14}><path d="M6 1H1v12h5M9 1h6v12H9M5.500 4.500l4.500 5M10 4.500l-4.500 5M6 1l1.500 1.500L9 1M6 13l1.500-1.500L9 13" /></Icon>
        拼写检查
        <Caret />
      </IconText>
    </StatusItem>
    <StatusItem $pad="0 5px 0 4px" $rule>
      <IconText $gap={4}>
        <Icon h={14}><path d="M6 13H1V1h5l1.500 1.500L9 1h6v4" /><circle cx="9.500" cy="8" r="3.300" fill="#e3e6ea" /><path d="M12 10.500l2.500 3" /></Icon>
        内容检查
        <Caret />
      </IconText>
    </StatusItem>
    <StatusRight>
      <ViewButton aria-label="护眼模式"><EyeCareIcon s={17} /></ViewButton>
      <ViewRule $h={14} />
      <ViewButton $active aria-label="页面视图"><Icon w={14} h={16}><path d="M.6 1H9.500L13.400 4.500V15H.6zM3.500 6.500h7M3.500 10h7" /></Icon></ViewButton>
      <ViewButton aria-label="大纲"><Icon w={14} h={16}><path d="M0 2h2M4 2h10M2 6h2M6 6h8M2 10h2M6 10h8M0 14h2M4 14h10" /></Icon></ViewButton>
      <ViewButton aria-label="阅读版式"><BookIcon s={16} /></ViewButton>
      <ViewButton aria-label="Web版式"><Icon><circle cx="8" cy="8" r="7" /><ellipse cx="8" cy="8" rx="3" ry="7" /><path d="M1.500 5h13M1.500 11h13M8 1v14" /></Icon></ViewButton>
      <ViewButton aria-label="写作模式"><PenIcon s={16} /></ViewButton>
      <ZoomArea>
        <Icon w={14} h={14}><path d="M.6 4V.6H4M10 .6h3.400V4M13.400 10v3.400H10M4 13.400H.6V10M3.500 3.500h7v7h-7z" /></Icon>
        <ZoomValue>72%<Caret /></ZoomValue>
        <button aria-label="缩小"><Icon w={10} h={10} sw={2}><path d="M0 5h10" /></Icon></button>
        <ZoomSlider aria-label="显示比例" min={10} max={190} defaultValue={70} />
      </ZoomArea>
      <button aria-label="放大"><Icon w={10} h={10} sw={2}><path d="M0 5h10M5 0v10" /></Icon></button>
      <FullScreenButton aria-label="全屏显示"><FullIcon s={15} /></FullScreenButton>
    </StatusRight>
  </StatusBar>
);

const Floating = () => (
  <>
    <EdgeMeter>{meter.map((c, i) => <MeterBar key={i} $c={c} />)}</EdgeMeter>
    <ImeBar>
      <ImeLogo>
        <svg width="32" height="31" viewBox="0 0 32 31" aria-hidden="true">
          <path d="M1 6.500Q.6 4.500 2.500 4L22 .4q2-.3 2.600 1.600L31 22q.5 2-1.500 3L9 30q-2 .5-2.600-1.500z" fill="#f4581f" />
          <path d="M25 8Q22 4.500 14.500 5.800 6.500 7.500 7.500 12q1 3.500 8 3.200 8-.3 8.500 2.800.3 4-6.500 5-5.500.5-8.500-2.500" fill="none" stroke="#fff" strokeWidth="4" />
        </svg>
      </ImeLogo>
      <ImeChar>中</ImeChar>
      <Icon color="#0a6fd8" sw={1.600}><circle cx="5" cy="5.500" r="1.800" /><circle cx="11.500" cy="8.500" r="2" fill="#0a6fd8" stroke="none" /><path d="M12.500 8.500q.3 3-2.500 4.500" /></Icon>
      <Icon color="#0a6fd8" sw={1.600}><rect x="5.500" y="1" width="5" height="8" rx="2.500" fill="#0a6fd8" /><path d="M2.500 6.500q0 5 5.500 5t5.500-5M8 12v3M5.500 15.200h5" /></Icon>
      <Icon color="#0a6fd8" sw={1.500}><rect x="1" y="2.500" width="14" height="11" rx="1" /><path d="M3 5.500h10M3 8h10" strokeDasharray="2 1" strokeWidth="1.400" /><path d="M4.500 11h7" /></Icon>
      <Icon w={15} color="#0a6fd8" sw={1.500}><path d="M1.500 1.500H6V6H1.500zM1.500 9H6v4.500H1.500zM9 9h4.500v4.500H9z" fill="#0a6fd8" /><circle cx="11.200" cy="3.800" r="2.400" /></Icon>
    </ImeBar>
    <Watermark>
      <svg width="42" height="42" viewBox="0 0 42 42" aria-hidden="true">
        <path d="M42 1Q20 2 7 13-2 23 2 32q2-14 16-22Q30 3 42 1z" fill="#3f9be6" />
        <path d="M2 32q3 4 9 2-4-9 4-15 7-4 10 0-1-8-9-4Q4 20 2 32z" fill="#3a7fd0" />
        <path d="M24 14q10-3 16 1 4 10-7 18-12 8-22 6 14-1 21-9 5-8-8-16z" fill="#45b96b" />
        <path d="M11 26q3-5 8-3 4 3 0 6-6 4-11 4 8 3 15-1 6-5 3-10 5 6 1 12-6 6-18 5" fill="#4b94d8" />
        <path d="M9 38q12 1 22-6-5 8-22 6z" fill="#e6dc4a" />
      </svg>
      <div>
        <MarkTitle>极光下载站</MarkTitle>
        <MarkSite>www.xz7.com</MarkSite>
      </div>
    </Watermark>
  </>
);

export default function App() {
  return (
    <Shell>
      <GlobalStyle />
      <Title />
      <Header>
        <Menu />
        <RibbonBar />
      </Header>
      <Workspace>
        <VRuler>
          <VTop><TabStop /><VCell $fixed>2</VCell></VTop>
          <VBody><VCells>{evens(2, 46).map(n => <VCell key={n}>{n}</VCell>)}</VCells></VBody>
          <VTail><VCell $fixed>48</VCell></VTail>
        </VRuler>
        <Canvas>
          <HRuler>
            <HPart $w={69} $pad={11}><span>4</span><span>2</span></HPart>
            <HPart $w={421} $pad={11} $on>
              {evens(2, 36).map(n => <span key={n}>{n}</span>)}
              <IndentMark width="10" height="22" viewBox="0 0 10 22" fill="#fff" stroke={ink}>
                <path d="M1 .5h8v2L5 7.500 1 2.500zM5 7.500l4 5v2.500H1v-2.500zM1 15.500h8v6H1z" />
              </IndentMark>
              <IndentMark $end width="9" height="16" viewBox="0 0 9 16" fill="#fff" stroke={ink}>
                <path d="M4.500 0v9l4 4v2.500h-8V13l4-4" />
              </IndentMark>
            </HPart>
            <HPart $w={81} $pad={4}><span>38</span><span>40</span><span>42</span></HPart>
          </HRuler>
          <Spread>
            <Page>
              <Corners />
              <PageNumber>1</PageNumber>
              <DocumentText />
              <DocumentText />
            </Page>
            <Page>
              <Corners />
              <PageNumber>2</PageNumber>
              <TextCursor />
              <Arrow width="60" height="124" viewBox="0 0 60 124">
                <path d="M5 4l16 18-7-2-8 8z" fill="#f00" />
                <path d="M12 19l35 92" stroke="#f00" strokeWidth="3" />
              </Arrow>
            </Page>
          </Spread>
        </Canvas>
        <ScrollRail>
          <SplitBox>
            <svg width="10" height="12" viewBox="0 0 10 12" aria-hidden="true"><rect width="10" height="12" rx="1" fill="#b4bccd" /><path d="M3 2h4v1.500L5 5.500 3 3.500zM2 7.500h6V10H2z" fill="#fff" /></svg>
          </SplitBox>
          <RailButton $h={22} aria-label="向上滚动"><svg width="6" height="4" viewBox="0 0 6 4" fill="#76809b"><path d="M0 4h6L3 0z" /></svg></RailButton>
          <Thumb />
          <RailButton $h={22} aria-label="向下滚动"><Caret /></RailButton>
          <RailButton $h={14} aria-label="上一页"><svg width="6" height="8" viewBox="0 0 6 8" fill="#76809b"><path d="M0 4h6L3 0zM0 8h6L3 4z" /></svg></RailButton>
          <RailButton $h={22} aria-label="选择浏览对象"><Icon w={6} color="#76809b"><rect x=".6" y=".6" width="4.800" height="4.800" rx="1" /></Icon></RailButton>
          <RailButton $h={19} aria-label="下一页"><svg width="6" height="8" viewBox="0 0 6 8" fill="#76809b"><path d="M0 0h6L3 4zM0 4h6L3 8z" /></svg></RailButton>
        </ScrollRail>
        <TaskPane />
        <SideBar>
          <Grip />
          <SideButton aria-label="快捷"><RocketIcon /></SideButton>
          <SideButton $active aria-label="样式"><BrushIcon /></SideButton>
          <SideButton aria-label="选择"><CursorIcon /></SideButton>
          <SideButton aria-label="属性"><SlidersIcon /></SideButton>
          <SideButton aria-label="素材"><ShopIcon /></SideButton>
          <SideButton aria-label="帮助"><BulbIcon /></SideButton>
          <SideButton aria-label="查阅"><LookupIcon /></SideButton>
          <SideMore><Icon w={16} h={6}><circle cx="2.500" cy="3" r="1.600" /><circle cx="8" cy="3" r="1.600" /><circle cx="13.500" cy="3" r="1.600" /></Icon></SideMore>
        </SideBar>
      </Workspace>
      <Status />
      <Floating />
    </Shell>
  );
}
